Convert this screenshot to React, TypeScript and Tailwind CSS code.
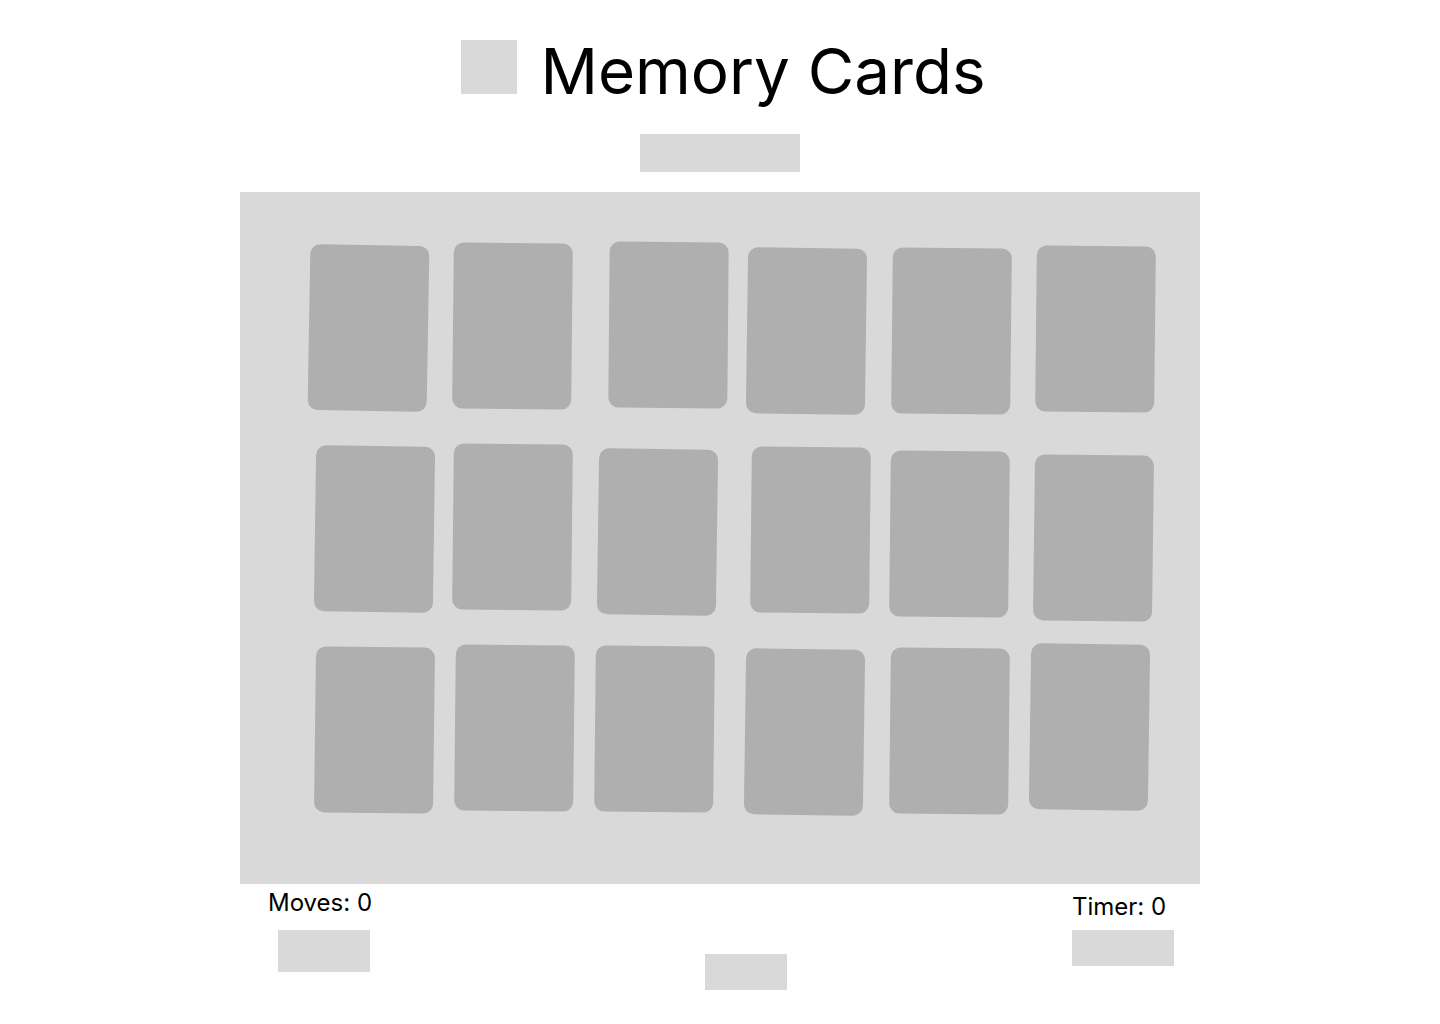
const cards = [
  'translate-x-[-4px] translate-y-[-1px] rotate-[1deg]',
  'translate-x-[-4px] translate-y-[-3px] rotate-[0.6deg]',
  'translate-x-[8px] translate-y-[-4px] rotate-[0.5deg]',
  'translate-x-[2px] translate-y-[2px] rotate-[0.8deg]',
  'translate-x-[3px] translate-y-[2px] rotate-[0.6deg]',
  'translate-x-[3px] translate-y-[0px] rotate-[0.6deg]',
  'translate-x-[2px] translate-y-[-1px] rotate-[0.8deg]',
  'translate-x-[-4px] translate-y-[-3px] rotate-[0.6deg]',
  'translate-x-[-3px] translate-y-[2px] rotate-[0.8deg]',
  'translate-x-[6px] translate-y-[0px] rotate-[0.6deg]',
  'translate-x-[1px] translate-y-[4px] rotate-[0.6deg]',
  'translate-x-[1px] translate-y-[8px] rotate-[0.7deg]',
  'translate-x-[2px] translate-y-[-1px] rotate-[0.7deg]',
  'translate-x-[-2px] translate-y-[-3px] rotate-[0.6deg]',
  'translate-x-[-6px] translate-y-[-2px] rotate-[0.6deg]',
  'translate-x-[0px] translate-y-[1px] rotate-[0.8deg]',
  'translate-x-[1px] translate-y-[0px] rotate-[0.6deg]',
  'translate-x-[-3px] translate-y-[-4px] rotate-[0.8deg]',
];

export default function App() {
  return (
    <div className="min-h-screen bg-white font-['Inter',sans-serif] text-black">
      <div className="mx-auto flex w-[960px] flex-col items-center">
        <header className="mt-[29px] ml-[7px] flex items-start gap-[23px]">
          <div className="mt-[11px] h-[54px] w-[56px] bg-[#d9d9d9]" />
          <h1 className="mt-[4px] text-[63.7px] leading-[76px] font-normal">Memory Cards</h1>
        </header>
        <div className="mt-[25px] h-[38px] w-[160px] bg-[#d9d9d9]" />

        <main className="mt-[20px] h-[692px] w-[960px] bg-[#d9d9d9] pt-[54px] pl-[73px]">
          <div className="grid grid-cols-[repeat(6,119px)] gap-x-[25px] gap-y-[35px]">
            {cards.map((c, i) => (
              <div key={i} className={`h-[166px] w-[119px] rounded-[10px] bg-[#afafaf] ${c}`} />
            ))}
          </div>
        </main>

        <footer className="flex w-full items-start">
          <div className="ml-[28px] mt-[4px] flex w-[110px] flex-col items-start">
            <span className="text-[24px] leading-[29px]">Moves: 0</span>
            <div className="mt-[13px] ml-[10px] h-[42px] w-[92px] bg-[#d9d9d9]" />
          </div>
          <div className="mt-[70px] ml-[327px] h-[36px] w-[82px] bg-[#d9d9d9]" />
          <div className="mr-[26px] ml-auto mt-[8px] flex flex-col items-start">
            <span className="text-[24px] leading-[29px]">Timer: 0</span>
            <div className="mt-[9px] h-[36px] w-[102px] bg-[#d9d9d9]" />
          </div>
        </footer>
      </div>
    </div>
  );
}
